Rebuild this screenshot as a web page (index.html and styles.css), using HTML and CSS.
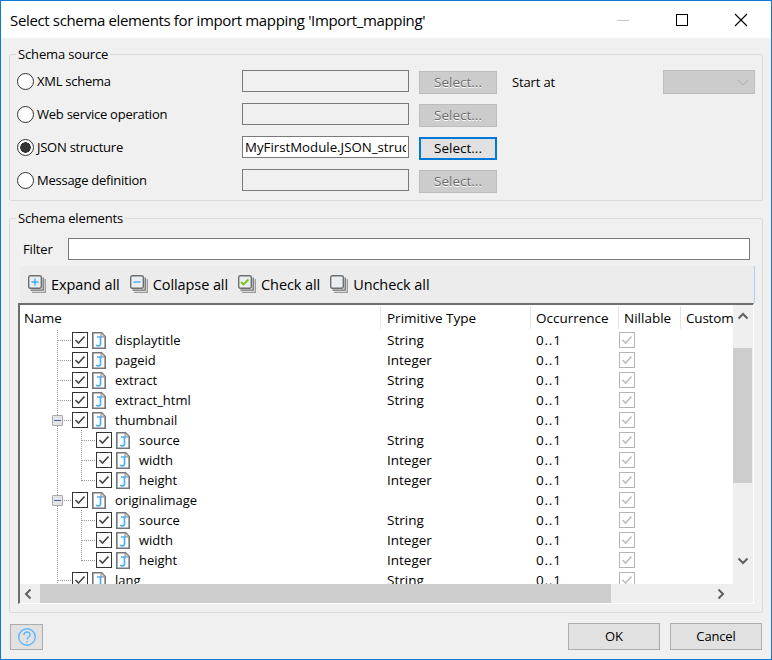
FILE: index.html
```html
<!DOCTYPE html>
<html lang="en">
<head>
    <meta charset="UTF-8">
    <title>Select schema elements for import mapping</title>
    <link rel="stylesheet" href="styles.css">
</head>
<body>
    <svg class="sprites" width="0" height="0">
        <symbol id="file" viewBox="0 0 14 17">
            <path d="M.8 .8h8.700l3.700 3.700v11.700H.8z" fill="#fff" stroke="#757575" stroke-width="1.600"/>
            <path d="M9 1v4h4" fill="#d8d8d8" stroke="#8a8a8a"/>
            <path d="M5 5h3.500v7.300c0 1.900-2.800 2.100-4.500 .8" fill="none" stroke="#45b0ff" stroke-width="1.700"/>
        </symbol>
        <symbol id="tick" viewBox="0 0 16 16">
            <rect x=".5" y=".5" width="15" height="15" fill="#fff" stroke="#333"/>
            <path d="M3.500 8l3 3 6-6.500" fill="none" stroke="#444" stroke-width="1.600"/>
        </symbol>
        <symbol id="tick-off" viewBox="0 0 16 16">
            <rect x=".5" y=".5" width="15" height="15" fill="#fff" stroke="#b4b4b4"/>
            <path d="M3.500 8l3 3 6-6.500" fill="none" stroke="#bdbdbd" stroke-width="1.600"/>
        </symbol>
        <symbol id="stack" viewBox="0 0 18 18">
            <path d="M4 17.300h13.300v-13.300" fill="none" stroke="#9a9a9a" stroke-width="1.300"/>
            <path d="M2.500 15.200h12.700v-12.700" fill="none" stroke="#6f6f6f" stroke-width="1.300"/>
            <rect x=".7" y=".7" width="12.600" height="12.600" rx="1.500" fill="#e9eef3" stroke="#6f6f6f" stroke-width="1.400"/>
        </symbol>
    </svg>

    <div class="window">
        <div class="titlebar">
            <span class="title">Select schema elements for import mapping 'Import_mapping'</span>
            <svg class="win-btn" width="14" height="14" viewBox="0 0 14 14"><path d="M1 7.500h12" stroke="#c6c6c6"/></svg>
            <svg class="win-btn" width="14" height="14" viewBox="0 0 14 14"><rect x="1.500" y="1.500" width="11" height="11" fill="none" stroke="#000"/></svg>
            <svg class="win-btn" width="14" height="14" viewBox="0 0 14 14"><path d="M1 1l12 12M13 1L1 13" stroke="#000" stroke-width="1.100"/></svg>
        </div>

        <div class="content">
            <fieldset class="group source-group">
                <legend>Schema source</legend>
                <label class="radio"><input type="radio" name="src">XML schema</label>
                <input class="field" type="text" disabled>
                <button class="btn-select" disabled>Select...</button>
                <span class="start-label">Start at</span>
                <div class="combo"><svg width="12" height="7" viewBox="0 0 12 7"><path d="M1 1l5 5 5-5" fill="none" stroke="#adadad"/></svg></div>

                <label class="radio row-start"><input type="radio" name="src">Web service operation</label>
                <input class="field" type="text" disabled>
                <button class="btn-select" disabled>Select...</button>

                <label class="radio row-start"><input type="radio" name="src" checked>JSON structure</label>
                <input class="field" type="text" value="MyFirstModule.JSON_structure">
                <button class="btn-select focused">Select...</button>

                <label class="radio row-start"><input type="radio" name="src">Message definition</label>
                <input class="field" type="text" disabled>
                <button class="btn-select" disabled>Select...</button>
            </fieldset>

            <fieldset class="group elements-group">
                <legend>Schema elements</legend>
                <div class="filter-row">
                    <span class="filter-label">Filter</span>
                    <input class="field filter-input" type="text">
                </div>

                <div class="toolbar">
                    <span class="tool">
                        <svg class="tool-icon" viewBox="0 0 18 18"><use href="#stack"/><path d="M3.500 7h7M7 3.500v7" stroke="#3fa9f5" stroke-width="1.400"/></svg>
                        Expand all
                    </span>
                    <span class="tool">
                        <svg class="tool-icon" viewBox="0 0 18 18"><use href="#stack"/><path d="M3.500 7h7" stroke="#3fa9f5" stroke-width="1.400"/></svg>
                        Collapse all
                    </span>
                    <span class="tool">
                        <svg class="tool-icon" viewBox="0 0 18 18"><use href="#stack"/><path d="M3 7l2.500 2.500 5-5" fill="none" stroke="#7ac70c" stroke-width="1.800"/></svg>
                        Check all
                    </span>
                    <span class="tool">
                        <svg class="tool-icon" viewBox="0 0 18 18"><use href="#stack"/></svg>
                        Uncheck all
                    </span>
                </div>

                <div class="tree">
                    <div class="tree-body">
                        <div class="tree-head">
                            <span class="head-name">Name</span>
                            <span>Primitive Type</span>
                            <span>Occurrence</span>
                            <span>Nillable</span>
                            <span>Custom</span>
                        </div>

                        <div class="node">
                            <div class="name lvl1"><svg class="cb"><use href="#tick"/></svg><svg class="doc"><use href="#file"/></svg>displaytitle</div>
                            <span>String</span><span>0..1</span><svg class="cb"><use href="#tick-off"/></svg>
                        </div>
                        <div class="node">
                            <div class="name lvl1"><svg class="cb"><use href="#tick"/></svg><svg class="doc"><use href="#file"/></svg>pageid</div>
                            <span>Integer</span><span>0..1</span><svg class="cb"><use href="#tick-off"/></svg>
                        </div>
                        <div class="node">
                            <div class="name lvl1"><svg class="cb"><use href="#tick"/></svg><svg class="doc"><use href="#file"/></svg>extract</div>
                            <span>String</span><span>0..1</span><svg class="cb"><use href="#tick-off"/></svg>
                        </div>
                        <div class="node">
                            <div class="name lvl1"><svg class="cb"><use href="#tick"/></svg><svg class="doc"><use href="#file"/></svg>extract_html</div>
                            <span>String</span><span>0..1</span><svg class="cb"><use href="#tick-off"/></svg>
                        </div>
                        <div class="node">
                            <div class="name lvl1 parent"><span class="expander"></span><svg class="cb"><use href="#tick"/></svg><svg class="doc"><use href="#file"/></svg>thumbnail</div>
                            <span></span><span>0..1</span><svg class="cb"><use href="#tick-off"/></svg>
                        </div>
                        <div class="node">
                            <div class="name lvl2"><svg class="cb"><use href="#tick"/></svg><svg class="doc"><use href="#file"/></svg>source</div>
                            <span>String</span><span>0..1</span><svg class="cb"><use href="#tick-off"/></svg>
                        </div>
                        <div class="node">
                            <div class="name lvl2"><svg class="cb"><use href="#tick"/></svg><svg class="doc"><use href="#file"/></svg>width</div>
                            <span>Integer</span><span>0..1</span><svg class="cb"><use href="#tick-off"/></svg>
                        </div>
                        <div class="node">
                            <div class="name lvl2 last"><svg class="cb"><use href="#tick"/></svg><svg class="doc"><use href="#file"/></svg>height</div>
                            <span>Integer</span><span>0..1</span><svg class="cb"><use href="#tick-off"/></svg>
                        </div>
                        <div class="node">
                            <div class="name lvl1 parent"><span class="expander"></span><svg class="cb"><use href="#tick"/></svg><svg class="doc"><use href="#file"/></svg>originalimage</div>
                            <span></span><span>0..1</span><svg class="cb"><use href="#tick-off"/></svg>
                        </div>
                        <div class="node">
                            <div class="name lvl2"><svg class="cb"><use href="#tick"/></svg><svg class="doc"><use href="#file"/></svg>source</div>
                            <span>String</span><span>0..1</span><svg class="cb"><use href="#tick-off"/></svg>
                        </div>
                        <div class="node">
                            <div class="name lvl2"><svg class="cb"><use href="#tick"/></svg><svg class="doc"><use href="#file"/></svg>width</div>
                            <span>Integer</span><span>0..1</span><svg class="cb"><use href="#tick-off"/></svg>
                        </div>
                        <div class="node">
                            <div class="name lvl2 last"><svg class="cb"><use href="#tick"/></svg><svg class="doc"><use href="#file"/></svg>height</div>
                            <span>Integer</span><span>0..1</span><svg class="cb"><use href="#tick-off"/></svg>
                        </div>
                        <div class="node">
                            <div class="name lvl1"><svg class="cb"><use href="#tick"/></svg><svg class="doc"><use href="#file"/></svg>lang</div>
                            <span>String</span><span>0..1</span><svg class="cb"><use href="#tick-off"/></svg>
                        </div>
                    </div>

                    <div class="vscroll">
                        <svg class="arrow" width="12" height="8" viewBox="0 0 12 8"><path d="M1.500 6.500L6 2l4.500 4.500" fill="none" stroke="#606060" stroke-width="2"/></svg>
                        <div class="vthumb"></div>
                        <svg class="arrow arrow-down" width="12" height="8" viewBox="0 0 12 8"><path d="M1.500 1.500L6 6l4.500-4.500" fill="none" stroke="#606060" stroke-width="2"/></svg>
                    </div>

                    <div class="hscroll">
                        <svg class="arrow-h" width="8" height="12" viewBox="0 0 8 12"><path d="M6.500 1.500L2 6l4.500 4.500" fill="none" stroke="#606060" stroke-width="2"/></svg>
                        <div class="hthumb"></div>
                        <svg class="arrow-h arrow-right" width="8" height="12" viewBox="0 0 8 12"><path d="M1.500 1.500L6 6l-4.500 4.500" fill="none" stroke="#606060" stroke-width="2"/></svg>
                    </div>
                    <div class="corner"></div>
                </div>
            </fieldset>

            <div class="footer">
                <button class="btn-help">
                    <svg width="20" height="20" viewBox="0 0 20 20">
                        <circle cx="10" cy="10" r="8.300" fill="none" stroke="#5cb8ff" stroke-width="1.400"/>
                        <path d="M7 8c0-4 6-4 6 0 0 2-3 2-3 4.500" fill="none" stroke="#5cb8ff" stroke-width="1.400"/>
                        <path d="M10 14v1.500" stroke="#5cb8ff" stroke-width="1.500"/>
                    </svg>
                </button>
                <div class="footer-actions">
                    <button class="btn-action">OK</button>
                    <button class="btn-action">Cancel</button>
                </div>
            </div>
        </div>
    </div>
</body>
</html>
```
FILE: styles.css
```css
* {
    box-sizing: border-box;
}
body {
    margin: 0;
    font-family: "Open Sans", "Noto Sans", sans-serif;
    font-size: 13px;
    letter-spacing: -0.15px;
    color: #000;
}
button, input {
    font: inherit;
    letter-spacing: inherit;
}
.sprites {
    display: block;
}
.window {
    width: 772px;
    height: 660px;
    display: flex;
    flex-direction: column;
    background-color: #f0f0f0;
    border: 1px solid #0f7ad5;
}

/* title bar */
.titlebar {
    height: 37px;
    flex: none;
    display: flex;
    align-items: center;
    padding: 0 23px 0 9px;
    gap: 45px;
    background-color: #fff;
}
.title {
    flex: 1;
    font-size: 15px;
    letter-spacing: -0.35px;
}
.win-btn {
    flex: none;
}

.content {
    flex: 1;
    padding: 8px 8px 0;
}

/* group boxes */
.group {
    margin: 0;
    min-width: 0;
    border: 1px solid #dadada;
    border-radius: 2px;
}
.group legend {
    margin-left: 6px;
    padding: 0 2px;
    line-height: 16px;
}
.source-group {
    display: grid;
    grid-template-columns: 225px 167px 88px 166px 92px;
    grid-auto-rows: 24px;
    row-gap: 9px;
    padding: 8px 7px 7px 7px;
}
.source-group legend {
    margin-left: -1px;
}
.row-start {
    grid-column: 1;
}
.radio {
    display: flex;
    align-items: center;
    height: 22px;
    gap: 3px;
    letter-spacing: -0.25px;
}
.radio input {
    appearance: none;
    width: 17px;
    height: 17px;
    margin: 0;
    border: 1px solid #333;
    border-radius: 50%;
    background-color: #fff;
}
.radio input:checked {
    background: radial-gradient(circle, #333 0 5px, #fff 5.500px);
}
.field {
    height: 22px;
    padding: 0 2px;
    border: 1px solid #7a7a7a;
    background-color: #fff;
    outline: none;
    color: #000;
    font-size: 13.250px;
    letter-spacing: 0;
}
.field:disabled {
    background-color: #f0f0f0;
}
.btn-select {
    width: 78px;
    height: 23px;
    margin: 1px 0 0 10px;
    padding: 0 0 2px;
    border: 1px solid #bdbdbd;
    background-color: #cccccc;
    color: #6d6d6d;
    text-shadow: 0 1px 0 #fff;
    font-size: 13.500px;
    letter-spacing: 0;
}
.btn-select.focused {
    border: 2px solid #0078d7;
    background-color: #e1e1e1;
    color: #000;
    text-shadow: none;
}
.start-label {
    padding-left: 15px;
    line-height: 24px;
}
.combo {
    display: flex;
    align-items: center;
    justify-content: flex-end;
    padding-right: 5px;
    border: 1px solid #bdbdbd;
    background-color: #cccccc;
}

.elements-group {
    margin-top: 9px;
    padding: 12px 0 8px;
}
.filter-row {
    display: flex;
    align-items: center;
    height: 22px;
    padding: 0 12px 0 13px;
}
.filter-label {
    width: 45px;
}
.filter-input {
    flex: 1;
}

/* toolbar */
.toolbar {
    height: 37px;
    margin: 6px 7px 0 10px;
    padding: 0 0 0 8px;
    display: flex;
    align-items: center;
    gap: 10px;
    background-color: #ececec;
    border-right: 1px solid #a9d3f2;
    font-size: 14.500px;
    letter-spacing: -0.08px;
}
.tool {
    display: flex;
    align-items: center;
    gap: 5px;
}
.tool-icon {
    width: 18px;
    height: 18px;
    margin-top: -2px;
}

/* tree grid */
.tree {
    display: grid;
    grid-template-columns: 713px 20px;
    grid-template-rows: 279px 19px;
    margin-left: 8px;
    width: 736px;
    border-style: solid;
    border-width: 2px 1px 1px 2px;
    border-color: #6e6e6e #fff #fff #6e6e6e;
    font-size: 13.500px;
    letter-spacing: 0;
}
.tree-body {
    overflow: hidden;
    background-color: #fff;
}
.tree-head, .node {
    display: grid;
    grid-template-columns: 360px 150px 88px 62px 53px;
    align-items: center;
}
.tree-head {
    height: 25px;
}
.tree-head span {
    height: 23px;
    padding-left: 5px;
    border-left: 1px solid #e5e5e5;
    line-height: 25px;
    white-space: nowrap;
    overflow: hidden;
}
.tree-head span:nth-child(2) {
    padding-left: 6px;
}
.tree-head span:last-child {
    letter-spacing: -0.2px;
}
.tree-head .head-name {
    padding-left: 4px;
    border-left: none;
}
.node {
    height: 20px;
}
.node > span {
    padding-left: 7px;
}
.node > span:nth-child(3) {
    padding-left: 6px;
    letter-spacing: 0.8px;
}
.cb {
    display: block;
    width: 16px;
    height: 16px;
    flex: none;
}
.node > .cb {
    margin-left: 1px;
}
.name {
    height: 20px;
    display: flex;
    align-items: center;
    white-space: nowrap;
    background-repeat: no-repeat;
    font-size: 13px;
}
.doc {
    width: 14px;
    height: 17px;
    flex: none;
    margin: 0 9px 0 4px;
}
/* dotted tree guides, drawn as backgrounds of the name cell */
.lvl1 {
    padding-left: 52px;
    background-image:
        repeating-linear-gradient(to bottom, #999 0 1px, transparent 1px 2px),
        repeating-linear-gradient(to right, #999 0 1px, transparent 1px 2px);
    background-position: 37px 0, 38px 10px;
    background-size: 1px 20px, 14px 1px;
}
.lvl2 {
    padding-left: 76px;
    background-image:
        repeating-linear-gradient(to bottom, #999 0 1px, transparent 1px 2px),
        repeating-linear-gradient(to bottom, #999 0 1px, transparent 1px 2px),
        repeating-linear-gradient(to right, #999 0 1px, transparent 1px 2px);
    background-position: 37px 0, 61px 0, 62px 10px;
    background-size: 1px 20px, 1px 20px, 14px 1px;
}
.lvl2.last {
    background-size: 1px 20px, 1px 11px, 14px 1px;
}
.lvl1.parent {
    padding-left: 32px;
}
.expander {
    width: 11px;
    height: 11px;
    margin-right: 9px;
    flex: none;
    border: 1px solid #a9a9a9;
    border-radius: 1px;
    background: linear-gradient(#4d6a9a, #4d6a9a) center / 7px 1px no-repeat, #e4e4e4;
}

/* scrollbars */
.vscroll {
    background-color: #efefef;
    display: flex;
    flex-direction: column;
    padding-top: 7px;
}
.arrow {
    flex: none;
    align-self: center;
    margin-right: 1px;
}
.arrow-down {
    margin-top: 74px;
}
.vthumb {
    width: 19px;
    height: 135px;
    margin-top: 28px;
    background-color: #cdcdcd;
}
.hscroll {
    display: flex;
    align-items: center;
    background-color: #efefef;
}
.arrow-h {
    flex: none;
    margin: 0 8px 0 4px;
}
.hthumb {
    width: 571px;
    height: 19px;
    background-color: #cdcdcd;
}
.arrow-right {
    margin: 0 0 0 106px;
}
.corner {
    background-color: #efefef;
}

/* bottom buttons */
.footer {
    display: flex;
    justify-content: space-between;
    align-items: flex-start;
    margin-top: 10px;
    padding: 0 1px;
}
.footer-actions {
    display: flex;
    gap: 10px;
}
.btn-help {
    width: 33px;
    height: 26px;
    margin-top: 1px;
    padding: 0;
    display: flex;
    align-items: center;
    justify-content: center;
    border: 1px solid #adadad;
    background-color: #e1e1e1;
}
.btn-action {
    width: 92px;
    height: 27px;
    padding: 0 0 2px;
    border: 1px solid #adadad;
    background-color: #e1e1e1;
    color: #000;
}
```
